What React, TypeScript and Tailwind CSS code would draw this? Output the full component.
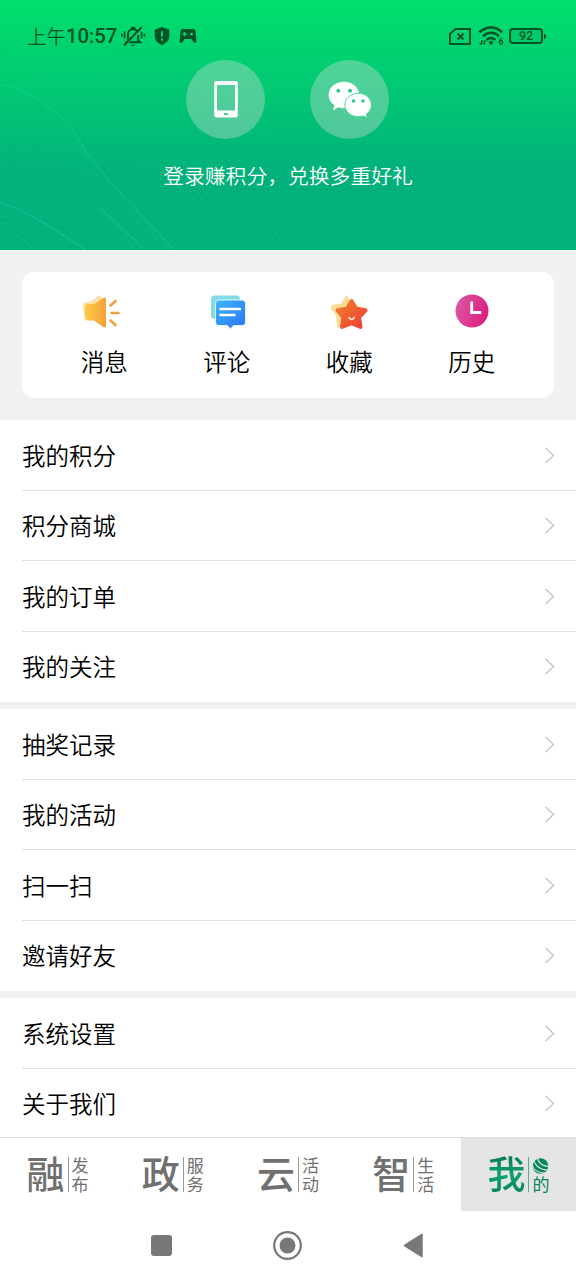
import React from "react";

const MENU_GROUPS = [
  ["我的积分", "积分商城", "我的订单", "我的关注"],
  ["抽奖记录", "我的活动", "扫一扫", "邀请好友"],
  ["系统设置", "关于我们"],
];

const TABS = [
  { big: "融", top: "发", bottom: "布" },
  { big: "政", top: "服", bottom: "务" },
  { big: "云", top: "活", bottom: "动" },
  { big: "智", top: "生", bottom: "活" },
];

// dotted mesh behind the header, one bundle of curves per wave
const waves = Array.from({ length: 26 }, (_, i) => i);

const HeaderPattern = () => (
  <svg className="absolute inset-0" width="576" height="250" viewBox="0 0 576 250" fill="none">
    {waves.map((i) => (
      <path
        key={`a${i}`}
        d={`M0 ${84 + i * 6} C34 ${92 + i * 6} 62 ${112 + i * 5} 80 ${142 + i * 4} S130 ${202 + i * 3} 180 ${256 + i * 2}`}
        stroke="#1fd6a0"
        strokeOpacity={i === 0 ? 0.25 : 0.3}
        strokeWidth={i === 0 ? 2 : 0.9}
        strokeDasharray={i === 0 ? undefined : "1.4 1.8"}
      />
    ))}
    {waves.map((i) => (
      <path
        key={`b${i}`}
        d={`M${8 + i * 8} ${50 + i * 0.5} C${60 + i * 8} ${80 + i} ${70 + i * 8} ${170 - i} ${140 + i * 7} 256`}
        stroke="#2be29a"
        strokeOpacity={0.26}
        strokeWidth={1.3}
        strokeDasharray="1.5 5"
      />
    ))}
    <path d="M0 202 C32 213 55 230 86 250" stroke="#1fd6b0" strokeOpacity={0.3} strokeWidth={2} />
    <path d="M0 222 C14 232 24 240 34 250" stroke="#1fd6b0" strokeOpacity={0.3} />
    <path d="M100 208 C112 220 130 236 146 250" stroke="#1fd6b0" strokeOpacity={0.25} strokeWidth={1.5} />
  </svg>
);

const StatusBar = () => (
  <div className="relative flex h-[60px] items-start justify-between pt-[22px] pr-[30px] pl-[27px] text-[#055226]">
    <div className="flex h-7 items-center">
      <span className="flex w-[93px] items-center leading-7 whitespace-nowrap">
        <span className="text-[19.5px]">上午</span>
        <span className="font-['Roboto',sans-serif] text-[20.2px] font-medium">10:57</span>
      </span>
      <svg width="26" height="22" viewBox="0 0 26 22" fill="none" stroke="currentColor" strokeWidth="2">
        <path d="M8 15.8V9.400a5 5 0 0 1 9.800-1.600M18.200 10v5.600l2 1.700H9.500M11 3.800 13 2.600l2.400 1" />
        <path d="M4 20.500 21.500 2.200M5 17.300h2" />
        <path d="M10.800 19.600a2.400 2 0 0 0 4.400 0z" fill="currentColor" stroke="none" />
        <path d="M4.600 6.500v7M1.800 8.400v3.400M21.600 6.500v7M24.400 8.400v3.400" strokeWidth="1.600" />
      </svg>
      <svg className="ml-[8px]" width="16" height="18" viewBox="0 0 16 18">
        <path d="M8 0 15.300 2.800V9c0 4.400-3.200 7.400-7.300 9C3.900 16.400.7 13.400.7 9V2.800z" fill="currentColor" />
        <path d="M8 4.300v5.200M8 11.500v2.300" stroke="#03d56e" strokeWidth="2" />
      </svg>
      <svg className="ml-[9px]" width="18" height="16" viewBox="0 0 18 16">
        <path d="M3.500 1h11a2 2 0 0 1 2 1.700l1 10.300c.2 2-2.300 2.600-3.300.8L12.600 11H5.400l-1.600 2.800C2.800 15.600.3 15 .5 13l1-10.300a2 2 0 0 1 2-1.700z" fill="currentColor" />
        <path d="M5.500 3.800v4.400M3.300 6h4.400" stroke="#03d56e" strokeWidth="1.500" />
        <circle cx="12.500" cy="6" r="1.500" fill="#03d56e" />
      </svg>
    </div>
    <div className="flex h-7 items-center">
      <svg width="22" height="17" viewBox="0 0 22 17" fill="none" stroke="currentColor" strokeWidth="2">
        <path d="M6.500 1H21v15H1V6z" />
        <path d="M8.500 5.500l6 6M14.500 5.500l-6 6" strokeWidth="2.200" />
      </svg>
      <svg className="ml-[7px]" width="26" height="20" viewBox="0 0 26 20" fill="none" stroke="currentColor" strokeWidth="2.500">
        <path d="M1.500 6.400C8-.2 18-.2 24 6.400M5 10.300c4.500-4.700 11.500-4.700 16 0M8.600 13.900c2.500-2.700 6.200-2.700 8.600 0" />
        <circle cx="13" cy="16.700" r="1.900" fill="currentColor" stroke="none" />
        <path d="M3.700 14v4.500M6.300 19v-4.500M1.500 17l2.200 1.500M6.300 14.500l2 1" strokeWidth="1.300" />
        <text x="20.500" y="19" fontSize="8.500" fontWeight="700" fill="currentColor" stroke="none" fontFamily="Roboto, sans-serif">6</text>
      </svg>
      <div className="ml-[5px] flex h-[16px] w-[34px] items-center justify-center rounded-[4px] border-2 border-current bg-black/5 font-['Roboto',sans-serif] text-[12.500px] leading-none font-medium">
        92
      </div>
      <div className="ml-px h-[5px] w-[2px] rounded-r-sm bg-current" />
    </div>
  </div>
);

const PhoneIcon = () => (
  <svg width="24" height="37" viewBox="0 0 24 37">
    <path
      fillRule="evenodd"
      d="M2.500 0h19A2.300 2.300 0 0 1 23.800 2.300v32a2.300 2.300 0 0 1-2.300 2.300h-19A2.300 2.300 0 0 1 .2 34.300v-32A2.300 2.300 0 0 1 2.500 0zM3 4v25.500h18V4zM10 32v2h4v-2z"
      fill="#fff"
    />
  </svg>
);

const WechatIcon = () => (
  <svg width="44" height="37" viewBox="0 0 44 37">
    <path d="M16 .8C7.300.8.600 6.600.600 14c0 4.200 2.200 7.700 5.800 10.200L5 29.200l5.300-2.900c2 .6 3.800.9 5.900.9 8.500 0 15-5.800 15-13.200S24.500.800 16 .8z" fill="#fff" />
    <path d="M30.300 12.300c-7.500 0-13.400 5.200-13.400 11.700s5.900 11.700 13.400 11.700c1.700 0 3.300-.3 4.800-.8l4.300 2.100-1.200-3.700c3.200-2.200 5.200-5.500 5.200-9.300 0-6.500-5.700-11.700-13.100-11.700z" fill="#fff" stroke="#4fd69f" strokeWidth="1" />
    <g fill="#36c88f">
      <circle cx="10.300" cy="9.800" r="2" />
      <circle cx="22" cy="9.800" r="2" />
      <circle cx="25.500" cy="20" r="1.800" />
      <circle cx="35" cy="20" r="1.800" />
    </g>
  </svg>
);

const MessageIcon = () => (
  <svg className="-ml-[7px]" width="38" height="36" viewBox="0 0 38 36">
    <defs>
      <linearGradient id="horn" x1="0" y1="0" x2="1" y2="0">
        <stop offset="0" stopColor="#fbcb45" />
        <stop offset="1" stopColor="#f5a13a" />
      </linearGradient>
    </defs>
    <path d="M.5 11.500 2 8.500l6.500-1 8-6 2.500 1V28L2.500 23z" fill="#fde2a8" />
    <path d="M5.500 10H12l9.500-6.300c1.500-.8 2.500 0 2.500 1.500v26.500c0 1.600-1.500 2.300-2.800 1.400L12 26.500H5.500c-1.500 0-2.500-1-2.500-2.500V12.500C3 11 4 10 5.500 10z" fill="url(#horn)" />
    <path d="M28.500 11.500 33.500 7M29.500 19h7M28.500 26.500l5 4.500" stroke="#eda142" strokeWidth="2.600" strokeLinecap="round" />
  </svg>
);

const CommentIcon = () => (
  <svg className="ml-[2px]" width="38" height="36" viewBox="0 0 38 36">
    <defs>
      <linearGradient id="bubble" x1="0" y1="0" x2="1" y2="1">
        <stop offset="0" stopColor="#3cb8fa" />
        <stop offset="1" stopColor="#2b72f6" />
      </linearGradient>
    </defs>
    <path d="M6 1.500h21.500c2 0 3.500 1.500 3.500 3v3L9 25H6c-2.500 0-4-1.300-4-3.500V5.500c0-2.500 1.500-4 4-4z" fill="#83dbe6" />
    <path d="M10 6h23c2 0 3.500 1.500 3.500 3.500V28c0 2-1.500 3.500-3.500 3.500h-8.500L21.500 35l-3-3.500H10c-2 0-3.500-1.500-3.500-3.500V9.500c0-2 1.500-3.500 3.500-3.500z" fill="url(#bubble)" stroke="#e2f6ff" strokeWidth="1" />
    <path d="M11.500 15H31M11.500 21h14" stroke="#fff" strokeWidth="2.400" strokeLinecap="round" />
  </svg>
);

const StarIcon = () => (
  <svg width="38" height="36" viewBox="0 0 38 36">
    <defs>
      <linearGradient id="star" x1="0" y1="0" x2="1" y2="1">
        <stop offset="0" stopColor="#f37d2c" />
        <stop offset="1" stopColor="#ea3f35" />
      </linearGradient>
    </defs>
    <path d="M16.500 2.500 20 9 27 11 23 18 20 30 8 32.500 7 21 2 14.500Q1.500 12 4.500 11.500L11.500 10.500z" fill="#fcdc97" stroke="#fcdc97" strokeWidth="2" strokeLinejoin="round" />
    <path d="M21.500 7 25.800 14.500 35.500 16.300 29 23.300 30.500 33 21.500 29.200 12 33 13.300 23.300 7.500 16.300 17.200 14.500z" fill="url(#star)" stroke="url(#star)" strokeWidth="4" strokeLinejoin="round" />
    <path d="M19 23.500a2.800 2.800 0 0 0 5.200 0" fill="none" stroke="#ffe0c8" strokeWidth="1.800" strokeLinecap="round" />
  </svg>
);

const HistoryIcon = () => (
  <svg width="38" height="36" viewBox="0 0 38 36">
    <defs>
      <linearGradient id="clock" x1="0" y1="0" x2="1" y2="0.300">
        <stop offset="0" stopColor="#d95ca4" />
        <stop offset="1" stopColor="#dd2183" />
      </linearGradient>
    </defs>
    <circle cx="19" cy="17" r="16.500" fill="url(#clock)" />
    <path d="M18.700 7.500v11h9.500" fill="none" stroke="#fff" strokeWidth="2.800" />
  </svg>
);

const SHORTCUTS = [
  { label: "消息", Icon: MessageIcon },
  { label: "评论", Icon: CommentIcon },
  { label: "收藏", Icon: StarIcon },
  { label: "历史", Icon: HistoryIcon },
];

const App: React.FC = () => {
  return (
    <div className="flex h-[1280px] w-[576px] flex-col overflow-hidden bg-[#f1f1f1] font-['Noto_Sans_CJK_SC',sans-serif] font-[350] text-black">
      <header className="relative h-[250px] shrink-0 bg-linear-to-b from-[#00df6c] via-[#02c573] via-40% to-[#02b07b] to-70%">
        <HeaderPattern />
        <StatusBar />
        <div className="relative flex justify-center gap-[45px] pr-px">
          <div className="flex size-[79px] items-center justify-center rounded-full bg-[#e0e0e0]/35">
            <PhoneIcon />
          </div>
          <div className="flex size-[79px] items-center justify-center rounded-full bg-[#e0e0e0]/35">
            <WechatIcon />
          </div>
        </div>
        <p className="relative mt-[21px] text-center text-[20.800px] leading-[30px] text-white">登录赚积分，兑换多重好礼</p>
      </header>

      <section className="mx-[22px] mt-[22px] flex h-[126px] shrink-0 rounded-xl bg-white pr-[21px] pl-[21px] pt-[22px]">
        {SHORTCUTS.map(({ label, Icon }) => (
          <div key={label} className="flex flex-1 flex-col items-center">
            <Icon />
            <span className="mt-[14px] text-[23.500px] leading-[34px]">{label}</span>
          </div>
        ))}
      </section>

      <main className="mt-[22px] flex h-[717px] shrink-0 flex-col gap-[7px] overflow-hidden">
        {MENU_GROUPS.map((rows) => (
          <ul key={rows[0]} className="shrink-0 bg-white pl-[22px]">
            {rows.map((row) => (
              <li
                key={row}
                className="flex h-[70.500px] items-center justify-between border-b border-[#e1e1e1] pt-px pr-[21px] text-[23.500px] last:border-white"
              >
                <span>{row}</span>
                <svg width="11" height="17" viewBox="0 0 11 17" fill="none" stroke="#c8c8c8" strokeWidth="1.500">
                  <path d="M1.500 1 9.500 8.500 1.500 16" />
                </svg>
              </li>
            ))}
          </ul>
        ))}
      </main>

      <nav className="flex h-[74px] shrink-0 border-t border-[#dcdcdc] bg-white">
        {TABS.map((tab) => (
          <div key={tab.big} className="flex flex-1 items-center justify-center text-[#707070]">
            <span className="pb-[6px] text-[38px] leading-[50px] font-medium">{tab.big}</span>
            <span className="mx-[3px] h-[35px] w-px bg-[#999]" />
            <span className="flex flex-col pt-[2px] font-['Liberation_Sans','Noto_Sans_CJK_SC',sans-serif] text-[17px] leading-[19px] font-normal">
              <span>{tab.top}</span>
              <span>{tab.bottom}</span>
            </span>
          </div>
        ))}
        <div className="flex flex-1 items-center justify-center bg-[#e5e5e5] text-[#07875e]">
          <span className="bg-linear-to-b from-[#066b4b] via-[#0aa36f] to-[#067650] bg-clip-text pb-[6px] text-[38px] leading-[50px] font-medium text-transparent">我</span>
          <span className="mx-[3px] h-[35px] w-px bg-[#5fa98f]" />
          <span className="flex flex-col items-center pt-[2px] font-['Liberation_Sans','Noto_Sans_CJK_SC',sans-serif] text-[17px] leading-[19px] font-normal">
            <svg width="17" height="19" viewBox="0 0 17 19">
              <circle cx="8.500" cy="9" r="7.800" fill="#07875e" />
              <path d="M5.500 0C5.500 5 10 9.500 17 9.500M2 2.500c.5 6 6 10.500 14 10.500M0 7C1 12.500 6 16 13 16" fill="none" stroke="#e5e5e5" strokeWidth="1.100" />
            </svg>
            <span>的</span>
          </span>
        </div>
      </nav>

      <footer className="flex flex-1 items-center justify-center gap-[101px] bg-white pr-[1px]">
        <div className="size-[21px] rounded-[3px] bg-[#787878]" />
        <svg width="29" height="29" viewBox="0 0 29 29" fill="none">
          <circle cx="14.500" cy="14.500" r="13.300" stroke="#787878" strokeWidth="2.200" />
          <circle cx="14.500" cy="14.500" r="8" fill="#787878" />
        </svg>
        <svg width="21" height="25" viewBox="0 0 21 25">
          <path d="M19 1.500v22L1.500 12.500z" fill="#787878" stroke="#787878" strokeWidth="1.500" strokeLinejoin="round" />
        </svg>
      </footer>
    </div>
  );
};

export default App;
